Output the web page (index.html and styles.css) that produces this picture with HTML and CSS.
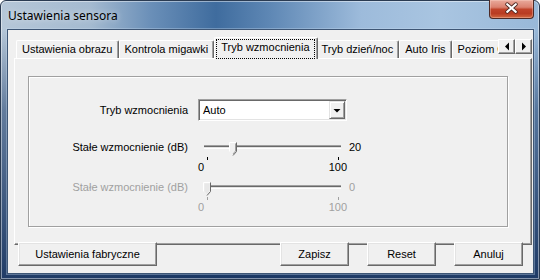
FILE: index.html
```html
<!DOCTYPE html>
<html lang="pl">
<head>
<meta charset="utf-8">
<title>Ustawienia sensora</title>
<link rel="stylesheet" href="styles.css">
</head>
<body>
<div class="window">
  <div class="titlebar">
    <span class="title">Ustawienia sensora</span>
    <div class="close">
      <svg width="45" height="19" viewBox="0 0 45 19">
        <path d="M18 5 L27 13 M27 5 L18 13" stroke="#4a2620" stroke-width="4" stroke-linecap="round" fill="none"/>
        <path d="M18 5 L27 13 M27 5 L18 13" stroke="#fff" stroke-width="2.2" stroke-linecap="round" fill="none"/>
      </svg>
    </div>
  </div>
  <div class="client">
    <div class="tabstrip">
      <div class="tabs">
        <div class="tab">Ustawienia obrazu</div>
        <div class="tab">Kontrola migawki</div>
        <div class="tab active"><span class="focus">Tryb wzmocnienia</span></div>
        <div class="tab">Tryb dzień/noc</div>
        <div class="tab">Auto Iris</div>
        <div class="tab">Poziom Czerni</div>
      </div>
      <div class="scroll">
        <div class="arrow"><svg width="14" height="13" viewBox="0 0 14 13"><path d="M5 6.5 L9 2.5 V10.5 Z" fill="#000"/></svg></div>
        <div class="arrow"><svg width="14" height="13" viewBox="0 0 14 13"><path d="M9 6.5 L5 2.5 V10.5 Z" fill="#000"/></svg></div>
      </div>
    </div>
    <div class="panel">
      <div class="group">
        <div class="combo-row">
          <span class="lbl">Tryb wzmocnienia</span>
          <div class="combo">
            <span class="combo-text">Auto</span>
            <div class="drop"><svg width="14" height="15" viewBox="0 0 14 15"><path d="M3.5 6 H10.5 L7 9.5 Z" fill="#000"/></svg></div>
          </div>
        </div>
        <div class="slider-row">
          <span class="lbl">Stałe wzmocnienie (dB)</span>
          <div class="slider" style="--v:20">
            <div class="track"></div>
            <svg class="thumb" width="8" height="14" viewBox="0 0 8 14">
              <path d="M0.5 0.5 H7.5 V9.5 L4 13.5 L0.5 9.5 Z" fill="#f0f0f0"/>
              <path d="M0.5 9.5 V0.5 H7" stroke="#fff" fill="none"/>
              <path d="M7.5 0.5 V9.5 L4 13.5" stroke="#696969" fill="none"/>
              <path d="M6.5 1.5 V9 L4 12" stroke="#a0a0a0" fill="none"/>
            </svg>
            <div class="ticks"><i></i><i></i></div>
            <div class="scale"><span>0</span><span>100</span></div>
          </div>
          <span class="val">20</span>
        </div>
        <div class="slider-row disabled">
          <span class="lbl">Stałe wzmocnienie (dB)</span>
          <div class="slider" style="--v:0">
            <div class="track"></div>
            <svg class="thumb" width="8" height="14" viewBox="0 0 8 14">
              <path d="M0.5 0.5 H7.5 V9.5 L4 13.5 L0.5 9.5 Z" fill="#f0f0f0"/>
              <path d="M0.5 9.5 V0.5 H7" stroke="#fff" fill="none"/>
              <path d="M7.5 0.5 V9.5 L4 13.5" stroke="#696969" fill="none"/>
              <path d="M1.5 1.5 H6.5 V9 L4 12 L1.5 9 Z" fill="#e8e8e8"/>
            </svg>
            <div class="ticks"><i></i><i></i></div>
            <div class="scale"><span>0</span><span>100</span></div>
          </div>
          <span class="val">0</span>
        </div>
      </div>
    </div>
    <div class="buttons">
      <div class="btn wide">Ustawienia fabryczne</div>
      <div class="btn push">Zapisz</div>
      <div class="btn">Reset</div>
      <div class="btn">Anuluj</div>
    </div>
  </div>
</div>
</body>
</html>
```
FILE: styles.css
```css
html, body {
  margin: 0;
  padding: 0;
}
body {
  width: 540px;
  height: 280px;
  overflow: hidden;
  background: #fff;
  font-family: "Liberation Sans", Arial, sans-serif;
  font-size: 11px;
  color: #000;
}
.window {
  box-sizing: border-box;
  width: 540px;
  height: 280px;
  border: 1px solid #2a3b52;
  border-radius: 6px 6px 0 0;
  padding: 0 5px 5px 6px;
  display: flex;
  flex-direction: column;
  background:
    linear-gradient(180deg, rgba(30,62,108,0) 0px, rgba(30,62,108,0) 28px, rgba(30,62,108,0.55) 110px, rgba(24,52,96,0.95) 279px),
    linear-gradient(90deg, #b6c7d8 0px, #a4bad0 90px, #6a8fb8 150px, #3f6c9e 215px, #5f88b5 270px, #9dbbdb 360px, #a9c5e1 440px, #98b8d8 540px);
  box-shadow: inset 0 0 0 1px rgba(255,255,255,0.45);
}
.titlebar {
  height: 28px;
  display: flex;
  align-items: flex-start;
}
.title {
  font-family: "Noto Sans", "Open Sans", sans-serif;
  font-size: 12px;
  line-height: 16px;
  padding: 7px 0 0 1px;
  color: #000;
  text-shadow: 0 0 6px rgba(255,255,255,0.7);
}
.close {
  margin-left: auto;
  margin-top: -1px;
  margin-right: 0;
  width: 45px;
  height: 19px;
  box-sizing: border-box;
  border: 1px solid #4d2a26;
  border-top: none;
  border-radius: 0 0 4px 4px;
  background: linear-gradient(180deg, #e9aa9c 0%, #db8270 40%, #c0432a 52%, #b93c22 75%, #d2683f 100%);
  box-shadow: inset 0 0 0 1px rgba(255,220,210,0.35);
  display: flex;
  align-items: center;
  justify-content: center;
}
.close svg {
  display: block;
  margin-top: -1px;
}
.client {
  flex: 1;
  display: flex;
  flex-direction: column;
  background: #f0f0f0;
  border: 1px solid #3e5675;
  box-shadow: 0 0 0 1px rgba(200,220,240,0.35);
}
.tabstrip {
  position: relative;
  z-index: 2;
  height: 22px;
  margin: 7px 1px 0 6px;
  display: flex;
  align-items: flex-end;
}
.tabs {
  flex: 1;
  min-width: 0;
  height: 22px;
  display: flex;
  align-items: flex-end;
  overflow: hidden;
  padding-left: 2px;
  white-space: nowrap;
}
.tab {
  flex: none;
  box-sizing: border-box;
  height: 18px;
  margin-bottom: 1px;
  padding: 2px 5px 0 5px;
  line-height: 13px;
  background: #f0f0f0;
  border-top: 1px solid #fff;
  border-left: 1px solid #fff;
  border-right: 1px solid #696969;
  border-radius: 2px 2px 0 0;
  box-shadow: inset -1px 0 0 #a0a0a0;
}
.tab.active {
  position: relative;
  height: 22px;
  margin: 0 -2px 0 -2px;
  padding: 1px 2px 0 1px;
  z-index: 3;
}
.focus {
  display: block;
  box-sizing: border-box;
  height: 20px;
  padding: 1px 4px 0 4px;
  border: 1px dotted #000;
  line-height: 13px;
}
.tab:nth-child(2) {
  margin-right: 2px;
}
.scroll {
  align-self: flex-start;
  margin-top: 2px;
  display: flex;
}
.arrow {
  box-sizing: border-box;
  width: 17px;
  height: 15px;
  background: #f0f0f0;
  border-top: 1px solid #fff;
  border-left: 1px solid #fff;
  border-right: 1px solid #696969;
  border-bottom: 1px solid #696969;
  box-shadow: inset -1px -1px 0 #a0a0a0;
  display: flex;
  align-items: center;
  justify-content: center;
}
.arrow svg { display: block; }
.panel {
  position: relative;
  z-index: 1;
  box-sizing: border-box;
  height: 187px;
  margin: -1px 1px 0 6px;
  border-top: 1px solid #fff;
  border-left: 1px solid #fff;
  border-right: 1px solid #696969;
  border-bottom: 1px solid #696969;
  box-shadow: inset -1px -1px 0 #a0a0a0;
  padding: 17px 0 0 13px;
}
.group {
  box-sizing: border-box;
  width: 480px;
  height: 151px;
  border: 1px solid #a0a0a0;
  box-shadow: inset 1px 1px 0 #fff, 1px 1px 0 #fff;
  padding-top: 22px;
}
.combo-row {
  display: flex;
  align-items: center;
  height: 22px;
}
.lbl {
  width: 159px;
  text-align: right;
  line-height: 13px;
  flex: none;
}
.combo {
  margin-left: 10px;
  box-sizing: border-box;
  width: 149px;
  height: 22px;
  background: #fff;
  border-top: 1px solid #a0a0a0;
  border-left: 1px solid #a0a0a0;
  border-right: 1px solid #fff;
  border-bottom: 1px solid #fff;
  box-shadow: inset 1px 1px 0 #696969, inset -1px -1px 0 #e3e3e3;
  display: flex;
  align-items: center;
  padding: 0 1px 0 4px;
}
.combo-text {
  flex: 1;
  line-height: 13px;
  padding-top: 1px;
}
.drop {
  box-sizing: border-box;
  width: 16px;
  height: 18px;
  background: #f0f0f0;
  border-top: 1px solid #e3e3e3;
  border-left: 1px solid #e3e3e3;
  border-right: 1px solid #696969;
  border-bottom: 1px solid #696969;
  box-shadow: inset 1px 1px 0 #fff, inset -1px -1px 0 #a0a0a0;
  display: flex;
  align-items: center;
  justify-content: center;
}
.drop svg { display: block; }
.slider-row {
  display: flex;
  align-items: flex-start;
  height: 40px;
}
.combo-row + .slider-row {
  margin-top: 17px;
}
.slider-row .lbl {
  padding-top: 3px;
}
.slider {
  position: relative;
  margin-left: 10px;
  width: 149px;
  height: 36px;
  flex: none;
}
.track {
  margin: 7px 0 0 6px;
  width: 137px;
  height: 4px;
  background: linear-gradient(180deg, #a0a0a0 0 1px, #696969 1px 2px, #e3e3e3 2px 3px, #fff 3px 4px);
}
.thumb {
  position: absolute;
  top: 4px;
  left: calc(9px + var(--v) * 1.31px - 4px);
  display: block;
}
.ticks {
  position: relative;
  height: 3px;
  margin-top: 8px;
}
.ticks i {
  position: absolute;
  top: 0;
  width: 1px;
  height: 3px;
  background: #000;
}
.ticks i:first-child { left: 9px; }
.ticks i:last-child { left: 140px; }
.scale {
  display: flex;
  justify-content: space-between;
  line-height: 13px;
  margin-top: 1px;
}
.val {
  margin-left: 2px;
  padding-top: 3px;
  line-height: 13px;
}
.disabled .lbl,
.disabled .val,
.disabled .scale {
  color: #a0a0a0;
}
.disabled .ticks i {
  background: #a0a0a0;
}
.buttons {
  position: relative;
  z-index: 2;
  display: flex;
  margin-top: -3px;
  padding: 0 10px;
}
.btn {
  box-sizing: border-box;
  width: 69px;
  height: 24px;
  background: #f0f0f0;
  border-top: 1px solid #fff;
  border-left: 1px solid #fff;
  border-right: 1px solid #696969;
  border-bottom: 1px solid #696969;
  box-shadow: inset -1px -1px 0 #a0a0a0, inset 1px 1px 0 #e3e3e3;
  display: flex;
  align-items: center;
  justify-content: center;
  line-height: 13px;
}
.btn.wide { width: 139px; }
.btn.push { margin-left: auto; }
.btn + .btn:not(.push) { margin-left: 18px; }
```
